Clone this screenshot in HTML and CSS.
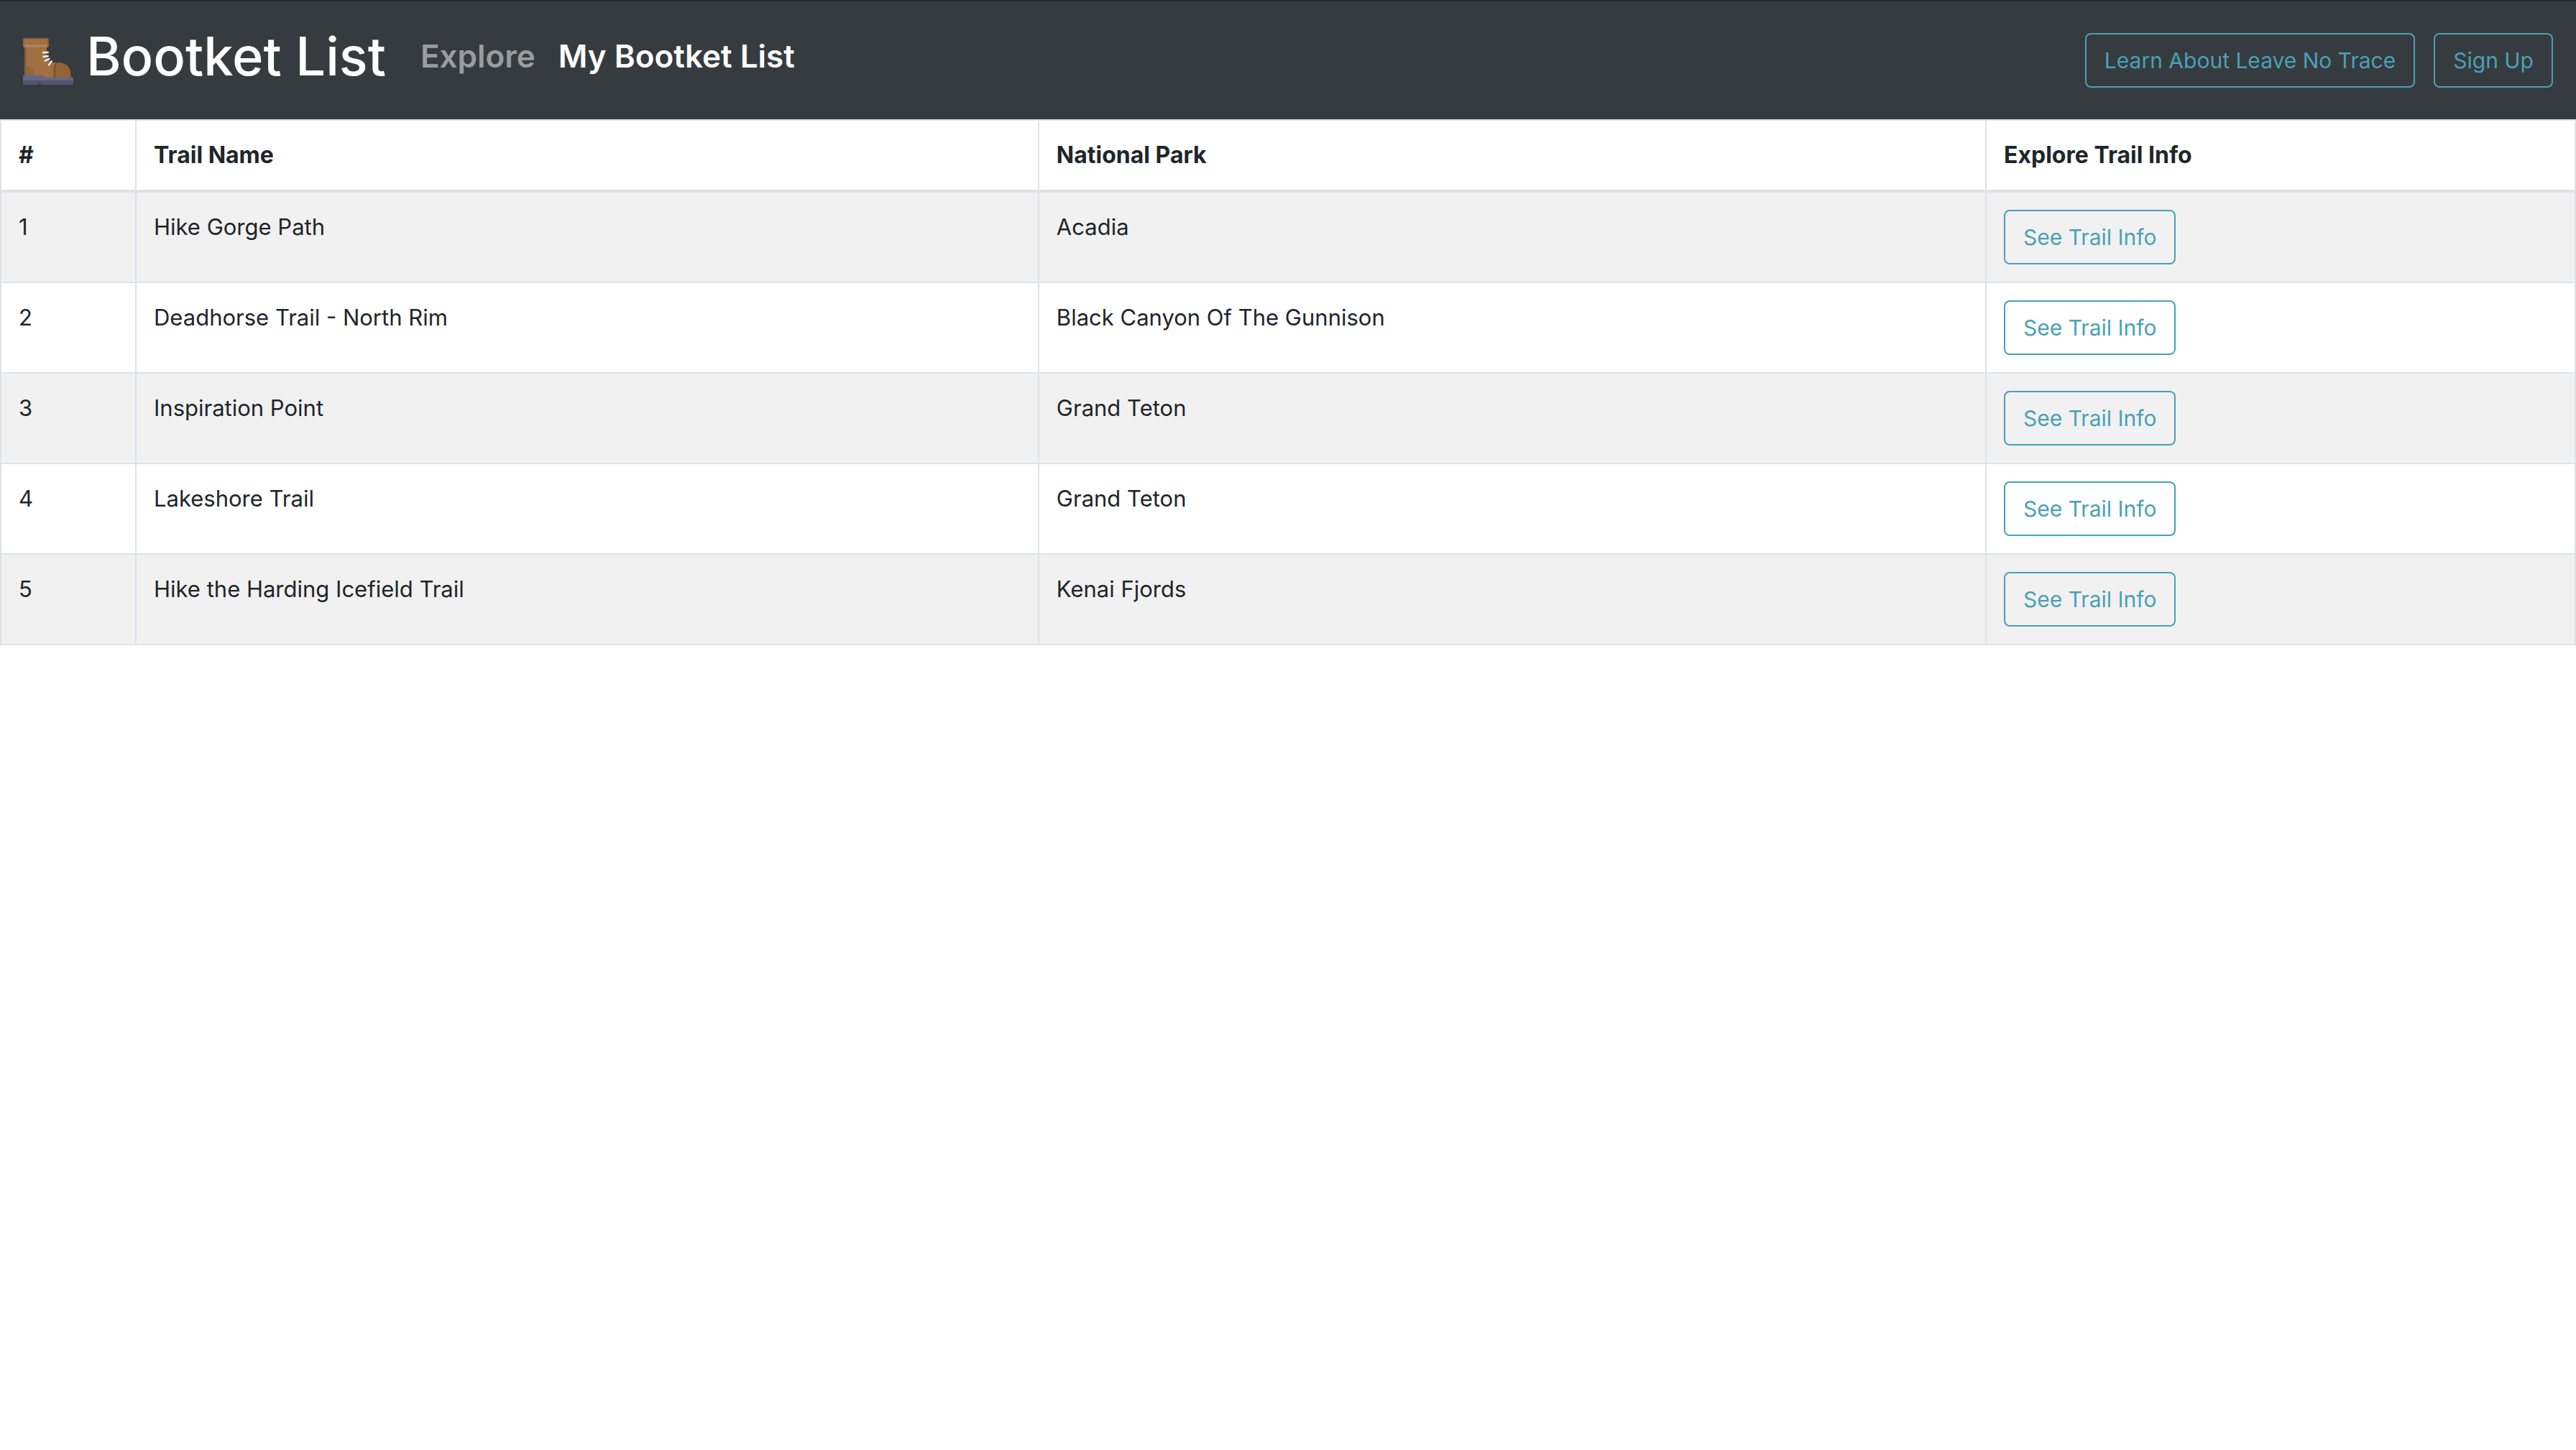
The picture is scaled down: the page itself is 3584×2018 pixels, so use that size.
FILE: index.html
```html
<!DOCTYPE html>
<html lang="en">
<head>
  <meta charset="utf-8">
  <meta name="viewport" content="width=device-width, initial-scale=1">
  <title>Bootket List</title>
  <link rel="stylesheet" href="styles.css">
</head>
<body>
  <header class="navbar">
    <div class="navbar-start">
      <a class="brand" href="#">
        <svg class="brand-icon" viewBox="0 0 210 196" aria-hidden="true">
          <path fill="#a07042" d="M7 30H99V73Q103 96 122 101H140V168H7Z"/>
          <path fill="#93633a" d="M7 116H16Q44 118 44 145V168H7Z"/>
          <path fill="#93633a" d="M136 101H152Q196 104 200 152V168H128V126Q128 108 136 101Z"/>
          <path fill="#835630" d="M136 101H146Q137 110 137 128V168H127V126Q128 108 136 101Z"/>
          <path fill="#835630" opacity=".5" d="M7 38H14V154H7Z"/>
          <path fill="#a07042" d="M5 0H102Q107 0 107 5V24H0V5Q0 0 5 0Z"/>
          <path fill="#b08152" d="M0 24H107V33Q106 38 101 38H6Q0 38 0 32Z"/>
          <path fill="#835630" opacity=".45" d="M5 0H102Q107 0 107 5V33Q106 38 101 38V4H6V38Q0 38 0 32V5Q0 0 5 0Z"/>
          <g stroke="#f1f3f5" stroke-width="7">
            <path d="M81 59H107M82 77L107 74M89 95L112 85M106 114L121 93"/>
          </g>
          <path fill="#646788" d="M0 154H76Q82 154 88 159Q94 163 102 163H205Q210 163 210 169V177H0Z"/>
          <path fill="#51546f" d="M0 175H210V189Q210 194 204 194H82Q76 194 72 189L67 185V188Q67 194 61 194H5Q0 194 0 189Z"/>
        </svg>
        <span>Bootket List</span>
      </a>
      <nav class="nav-links">
        <a class="nav-link" href="#">Explore</a>
        <a class="nav-link active" href="#" aria-current="page">My Bootket List</a>
      </nav>
    </div>
    <div class="navbar-end">
      <button class="btn" type="button">Learn About Leave No Trace</button>
      <button class="btn" type="button">Sign Up</button>
    </div>
  </header>
  <main>
    <table class="trails">
      <colgroup>
        <col class="col-number">
        <col class="col-trail">
        <col class="col-park">
        <col>
      </colgroup>
      <thead>
        <tr><th scope="col">#</th><th scope="col">Trail Name</th><th scope="col">National Park</th><th scope="col">Explore Trail Info</th></tr>
      </thead>
      <tbody>
        <tr><td>1</td><td>Hike Gorge Path</td><td>Acadia</td><td><button class="btn" type="button">See Trail Info</button></td></tr>
        <tr><td>2</td><td>Deadhorse Trail - North Rim</td><td>Black Canyon Of The Gunnison</td><td><button class="btn" type="button">See Trail Info</button></td></tr>
        <tr><td>3</td><td>Inspiration Point</td><td>Grand Teton</td><td><button class="btn" type="button">See Trail Info</button></td></tr>
        <tr><td>4</td><td>Lakeshore Trail</td><td>Grand Teton</td><td><button class="btn" type="button">See Trail Info</button></td></tr>
        <tr><td>5</td><td>Hike the Harding Icefield Trail</td><td>Kenai Fjords</td><td><button class="btn" type="button">See Trail Info</button></td></tr>
      </tbody>
    </table>
  </main>
</body>
</html>
```
FILE: styles.css
```css
* {
  box-sizing: border-box;
}

body {
  margin: 0;
  background: #fff;
  color: #212529;
  font-family: Inter, "Liberation Sans", sans-serif;
  font-size: 31px;
  line-height: 48px;
}

.navbar {
  display: flex;
  align-items: center;
  justify-content: space-between;
  padding: 28px 32px;
  border-top: 2px solid #28292a;
  background: #363b3f;
}

.navbar-start {
  display: flex;
  align-items: center;
  gap: 48px;
  margin-bottom: 12px;
}

.navbar-end {
  display: flex;
  gap: 26px;
}

.brand {
  display: flex;
  align-items: center;
  gap: 18px;
  color: #fff;
  font-size: 74px;
  font-weight: 500;
  line-height: 96px;
  text-decoration: none;
}

.brand-icon {
  width: 70px;
  height: 66px;
  margin-top: 16px;
}

.nav-links {
  display: flex;
  gap: 32px;
}

.nav-link {
  color: #9a9d9f;
  font-size: 44px;
  font-weight: 600;
  line-height: 72px;
  text-decoration: none;
}

.nav-link.active {
  color: #fff;
}

.btn {
  display: block;
  padding: 12px 25px;
  border: 2px solid #4aa1b5;
  border-radius: 8px;
  background: transparent;
  color: #4aa1b5;
  font: inherit;
  font-size: 30px;
  white-space: nowrap;
  cursor: pointer;
}

.trails {
  width: 100%;
  table-layout: fixed;
  border-collapse: separate;
  border-spacing: 0;
  border-top: 2px solid #dee2e6;
  border-left: 2px solid #dee2e6;
}

.col-number {
  width: 188px;
}

.col-trail {
  width: 35.06%;
}

.col-park {
  width: 36.8%;
}

.trails th,
.trails td {
  padding: 24px;
  border-right: 2px solid #dee2e6;
  border-bottom: 2px solid #dee2e6;
  text-align: left;
  vertical-align: top;
}

.trails th {
  border-bottom-width: 4px;
  font-size: 32px;
  font-weight: 700;
}

.trails tbody tr:nth-child(odd) {
  background: #f1f1f1;
}
```
